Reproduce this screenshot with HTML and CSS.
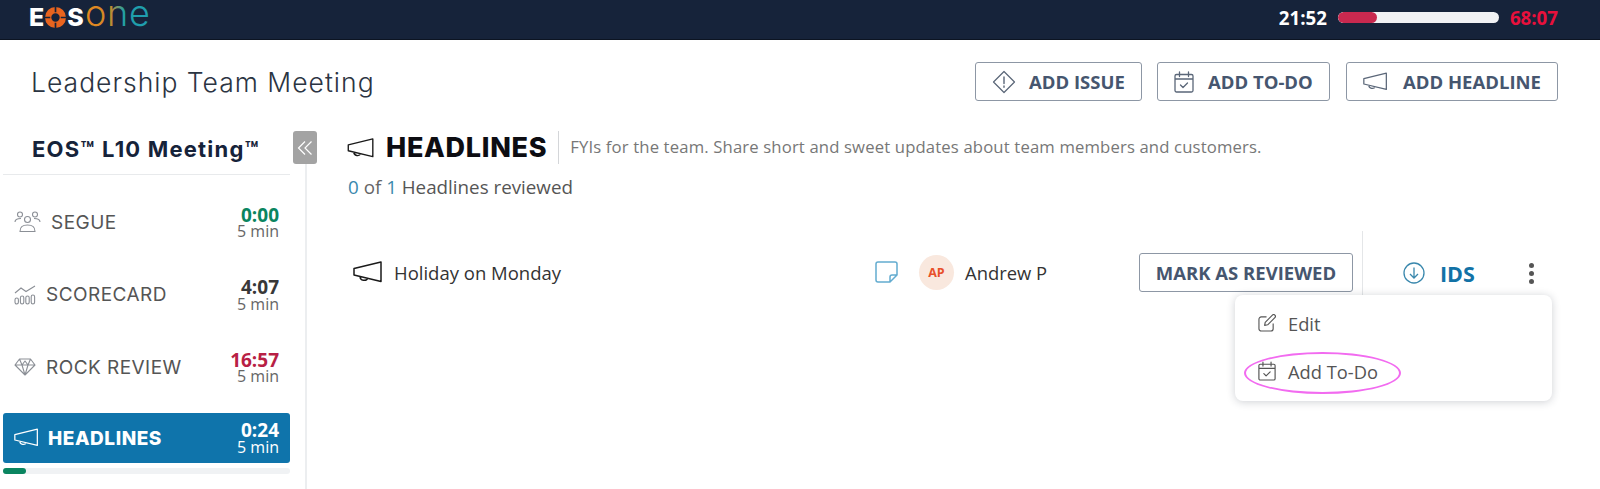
FILE: index.html
```html
<!DOCTYPE html>
<html lang="en">
<head>
<meta charset="utf-8">
<title>Leadership Team Meeting</title>
<link rel="stylesheet" href="styles.css">
</head>
<body>
<svg class="defs" width="0" height="0" aria-hidden="true">
  <defs>
    <linearGradient id="onegrad" x1="0" y1="0" x2="1" y2="0">
      <stop offset="0" stop-color="#e8861f"/>
      <stop offset="0.38" stop-color="#d08a28"/>
      <stop offset="0.6" stop-color="#1fa0a8"/>
      <stop offset="1" stop-color="#1f9db0"/>
    </linearGradient>
  </defs>
  <symbol id="horn" viewBox="0 0 30 22">
    <path d="M1 7.5 L28 1 V20.5 L1 14 Z M1 7.5 V14 M7 15.5 C7 20 13.5 20.5 14.5 17.2" fill="none" stroke="currentColor" stroke-width="1.5" stroke-linejoin="round"/>
  </symbol>
  <symbol id="cal" viewBox="0 0 20 22">
    <path d="M2.5 3.5 H17.5 A1.5 1.5 0 0 1 19 5 V19.5 A1.5 1.5 0 0 1 17.5 21 H2.5 A1.5 1.5 0 0 1 1 19.5 V5 A1.5 1.5 0 0 1 2.5 3.5 Z M1 8 H19 M5.5 1 V5.5 M14.5 1 V5.5 M6.5 14 L9 16.5 L13.5 12" fill="none" stroke="currentColor" stroke-width="1.3" stroke-linecap="round" stroke-linejoin="round"/>
  </symbol>
</svg>

<header class="topbar">
  <div class="logo">
    <span class="logo-eos">E</span>
    <svg class="logo-o" viewBox="0 0 20 20"><circle cx="10" cy="10" r="7" fill="none" stroke="#e8641f" stroke-width="6"/><path d="M10 0 V5 M10 15 V20 M0 10 H5 M15 10 H20" stroke="#16233a" stroke-width="1.6"/></svg>
    <span class="logo-eos">S</span>
    <svg class="logo-one" width="64" height="24" viewBox="0 0 64 24"><text class="logo-one-text" x="0" y="21" fill="url(#onegrad)">one</text></svg>
  </div>
  <div class="timer">
    <span class="timer-now">21:52</span>
    <div class="timer-bar"><div class="timer-fill"></div></div>
    <span class="timer-total">68:07</span>
  </div>
</header>

<section class="pagehead">
  <h1 class="page-title">Leadership Team Meeting</h1>
  <div class="actions">
    <button class="btn btn-issue">
      <svg class="btn-icon" width="24" height="24" viewBox="0 0 24 24"><path d="M12 1.5 L22.5 12 L12 22.5 L1.5 12 Z" fill="none" stroke="currentColor" stroke-width="1.2" stroke-linejoin="round"/><path d="M12 7 V13.5 M12 16 V17.2" stroke="currentColor" stroke-width="1.4" stroke-linecap="round"/></svg>
      ADD ISSUE
    </button>
    <button class="btn btn-todo">
      <svg class="btn-icon" width="20" height="22"><use href="#cal"/></svg>
      ADD TO-DO
    </button>
    <button class="btn btn-headline">
      <svg class="btn-icon" width="25" height="19"><use href="#horn"/></svg>
      ADD HEADLINE
    </button>
  </div>
</section>

<div class="layout">
  <aside class="sidebar">
    <h2 class="side-title">EOS™ L10 Meeting™</h2>
    <nav class="side-list">
      <div class="side-item">
        <svg class="side-icon segue" width="27" height="22" viewBox="0 0 27 22"><g fill="none" stroke="currentColor" stroke-width="1.1"><circle cx="6" cy="3.5" r="2.5"/><circle cx="21" cy="3.5" r="2.5"/><circle cx="13.5" cy="8.5" r="3"/><path d="M1 11 C1 8 3.5 7.5 7 7.5 M26 11 C26 8 23.5 7.5 20 7.5 M6 20.5 C6 15 9 14 13.5 14 C18 14 21 15 21 20.5 Z"/></g></svg>
        <span class="side-label">SEGUE</span>
        <div class="side-time"><b class="t-green">0:00</b><span>5 min</span></div>
      </div>
      <div class="side-item">
        <svg class="side-icon" width="22" height="20" viewBox="0 0 22 20"><g fill="none" stroke="currentColor" stroke-width="1.1"><path d="M1 8 L7 3 L12 6.5 L21 1"/><rect x="1" y="13" width="3.4" height="6" rx="1.7"/><rect x="6.4" y="11" width="3.4" height="8" rx="1.7"/><rect x="11.8" y="11" width="3.4" height="8" rx="1.7"/><rect x="17.2" y="10" width="3.4" height="9" rx="1.7"/></g></svg>
        <span class="side-label">SCORECARD</span>
        <div class="side-time"><b>4:07</b><span>5 min</span></div>
      </div>
      <div class="side-item">
        <svg class="side-icon" width="22" height="18" viewBox="0 0 22 18"><path d="M5.5 1 H16.5 L21 7 L11 17 L1 7 Z M1 7 H21 M5.5 1 L8 7 L11 3 L14 7 L16.5 1 M8 7 L11 17 L14 7" fill="none" stroke="currentColor" stroke-width="1.1" stroke-linejoin="round"/></svg>
        <span class="side-label">ROCK REVIEW</span>
        <div class="side-time"><b class="t-red">16:57</b><span>5 min</span></div>
      </div>
      <div class="side-item active">
        <svg class="side-icon" width="25" height="19"><use href="#horn"/></svg>
        <span class="side-label">HEADLINES</span>
        <div class="side-time"><b>0:24</b><span>5 min</span></div>
      </div>
      <div class="progress"><div class="progress-fill"></div></div>
    </nav>
  </aside>

  <main class="main">
    <button class="collapse" aria-label="Collapse">
      <svg width="16" height="16" viewBox="0 0 16 16"><path d="M8 1.5 L1.5 8 L8 14.5 M14.5 1.5 L8 8 L14.5 14.5" fill="none" stroke="#fff" stroke-width="1.2"/></svg>
    </button>
    <div class="section-head">
      <svg class="horn-lg" width="28" height="20"><use href="#horn"/></svg>
      <h2 class="section-title">HEADLINES</h2>
      <p class="section-desc">FYIs for the team. Share short and sweet updates about team members and customers.</p>
    </div>
    <p class="reviewed"><span class="num">0</span> of <span class="num">1</span> <span class="reviewed-word">Headlines reviewed</span></p>

    <div class="row">
      <svg class="horn-row" width="30" height="22"><use href="#horn"/></svg>
      <span class="row-title">Holiday on Monday</span>
      <svg class="note" width="23" height="22" viewBox="0 0 23 22"><path d="M3 1 H20 A2 2 0 0 1 22 3 V14 L15 21 H3 A2 2 0 0 1 1 19 V3 A2 2 0 0 1 3 1 Z M22 14 H17 A2 2 0 0 0 15 16 V21" fill="none" stroke="#63acd0" stroke-width="1.5" stroke-linejoin="round"/></svg>
      <span class="avatar">AP</span>
      <span class="owner">Andrew P</span>
      <button class="btn btn-review">MARK AS REVIEWED</button>
      <div class="ids-cell">
        <svg width="22" height="22" viewBox="0 0 22 22"><circle cx="11" cy="11" r="10" fill="none" stroke="#3a88ad" stroke-width="1.3"/><path d="M11 5.5 V16 M7 12 L11 16 L15 12" fill="none" stroke="#3a88ad" stroke-width="1.3"/></svg>
        <span class="ids">IDS</span>
        <span class="dots"><i></i><i></i><i></i></span>
      </div>
      <div class="menu">
        <div class="menu-item">
          <svg width="18" height="18" viewBox="0 0 19 19"><path d="M9 3 H3.5 A2.5 2.5 0 0 0 1 5.5 V15.5 A2.5 2.5 0 0 0 3.5 18 H13.5 A2.5 2.5 0 0 0 16 15.5 V10 M7 12 L7.6 8.8 L15.2 1.2 A1.4 1.4 0 0 1 17.8 3.8 L10.2 11.4 Z" fill="none" stroke="#555" stroke-width="1.2" stroke-linejoin="round"/></svg>
          <span>Edit</span>
        </div>
        <div class="menu-item">
          <svg class="menu-cal" width="18" height="20"><use href="#cal"/></svg>
          <span>Add To-Do</span>
        </div>
        <div class="ring"></div>
      </div>
    </div>
  </main>
</div>
</body>
</html>
```
FILE: styles.css
```css
* { box-sizing: border-box; }
html, body { margin: 0; padding: 0; }
body {
  width: 1600px;
  height: 489px;
  overflow: hidden;
  background: #fff;
  font-family: "Open Sans", sans-serif;
  color: #333;
}
.defs { position: absolute; }
h1, h2, p { margin: 0; font-weight: inherit; }

.topbar {
  height: 40px;
  background: #16233a;
  border-bottom: 1px solid #0c1422;
  display: flex;
  align-items: center;
  justify-content: space-between;
  padding: 0 42px 5px 29px;
}
.logo { display: flex; align-items: center; height: 24px; }
.logo-eos { font: 800 25px/24px Inter, sans-serif; color: #fff; }
.logo-o { width: 21px; height: 21px; margin: 0 1px; }
.logo-one { margin-left: 1px; flex: none; }
.logo-one-text {
  font: 300 36px Inter, sans-serif;
  letter-spacing: 0.7px;
}
.timer { display: flex; align-items: center; }
.timer-now { font-size: 18.7px; font-weight: 700; color: #fff; }
.timer-bar {
  width: 161px;
  height: 11px;
  margin: 0 11px;
  background: #f1f2f4;
  border-radius: 6px;
  overflow: hidden;
}
.timer-fill { width: 39px; height: 100%; background: #c8294f; border-radius: 6px; }
.timer-total { font-size: 18.7px; font-weight: 700; color: #e8103c; }

.pagehead {
  height: 91px;
  padding: 22px 42px 0 31px;
  display: flex;
  justify-content: space-between;
  align-items: flex-start;
}
.page-title {
  font: 300 26.5px/40px Inter, sans-serif;
  letter-spacing: 1px;
  color: #2b3442;
}
.actions { display: flex; gap: 15px; }
.btn {
  height: 39px;
  display: flex;
  align-items: center;
  background: #fff;
  border: 1px solid #8d97a5;
  border-radius: 3px;
  font: 700 18.5px "Open Sans", sans-serif;
  color: #46566f;
  padding: 0;
  white-space: nowrap;
}
.btn-issue { width: 167px; padding-left: 16px; }
.btn-todo { width: 173px; padding-left: 16px; margin-right: 1px; }
.btn-headline { width: 212px; padding-left: 16px; }
.btn-issue .btn-icon { margin-right: 13px; }
.btn-todo .btn-icon { margin-right: 14px; }
.btn-headline .btn-icon { margin-right: 15px; }
.btn-icon { color: #5a6678; flex: none; }

.layout { display: flex; height: 358px; }
.sidebar {
  width: 307px;
  flex: none;
  border-right: 2px solid #eceef0;
  padding: 0 15px 0 3px;
}
.side-title {
  font: 700 22px/26px Inter, sans-serif;
  letter-spacing: 1.2px;
  color: #16233a;
  padding: 5px 0 12px 29px;
  border-bottom: 1px solid #e8eaec;
  white-space: nowrap;
}
.side-list { display: flex; flex-direction: column; padding-top: 11px; }
.side-item {
  height: 72.5px;
  display: flex;
  align-items: center;
  padding: 0 11px 0 11px;
  color: #555;
}
.side-icon { color: #8b8f96; margin-right: 10px; flex: none; }
.side-label {
  font: 400 19px Inter, sans-serif;
  letter-spacing: 0.45px;
  color: #555;
  flex: 1;
}
.side-time {
  display: flex;
  flex-direction: column;
  align-items: flex-end;
  padding-top: 2px;
  font-size: 16px;
  line-height: 16.5px;
  color: #666;
}
.side-time b { font-size: 19px; font-weight: 700; color: #383838; }
.side-time b.t-green { color: #0a8560; }
.side-time b.t-red { color: #b81f45; }
.side-item.active {
  height: 50px;
  margin-top: 9px;
  background: #0f74ab;
  border-radius: 3px;
  color: #fff;
}
.side-item.active .side-icon { color: #fff; margin-right: 9px; }
.side-item.active .side-label { font-weight: 800; color: #fff; letter-spacing: 0.55px; padding-top: 2px; }
.side-item.active .side-time b,
.side-item.active .side-time span { color: #fff; }
.progress { height: 6px; margin-top: 5px; background: #f0f2f4; border-radius: 3px; }
.progress-fill { width: 22.5px; height: 100%; background: #0a8560; border-radius: 3px; }

.main { flex: 1; position: relative; padding: 0 0 0 40px; }
.collapse {
  position: absolute;
  left: -14px;
  top: 0;
  width: 24px;
  height: 33px;
  border: 0;
  border-radius: 3px;
  background: #a3a3a3;
  display: flex;
  align-items: center;
  justify-content: center;
  padding: 0;
}
.section-head { display: flex; align-items: center; height: 33px; }
.horn-lg { color: #1a1a1a; margin-right: 11px; flex: none; }
.section-title {
  font: 800 27px/33px Inter, sans-serif;
  letter-spacing: 0.7px;
  color: #0d0d12;
  padding-right: 11px;
  border-right: 1px solid #d4d6d9;
  height: 33px;
}
.section-desc { font-size: 16.7px; line-height: 30px; color: #777; margin: 0 0 2px 11px; letter-spacing: 0.14px; }
.reviewed { margin: 11px 0 0 1px; font-size: 18.8px; line-height: 24px; color: #666; }
.reviewed .num { color: #3a88ad; }
.reviewed-word { color: #555; }

.row {
  position: relative;
  display: flex;
  align-items: center;
  height: 64px;
  margin-top: 41px;
  padding-left: 6px;
}
.horn-row { color: #1a1a1a; flex: none; margin-right: 11px; }
.row-title { width: 481px; font-size: 18.5px; color: #333; flex: none; }
.note { margin-right: 21px; flex: none; }
.avatar {
  width: 35px;
  height: 35px;
  border-radius: 50%;
  background: #f9e8de;
  color: #e8502a;
  font-size: 12.5px;
  font-weight: 700;
  display: flex;
  align-items: center;
  justify-content: center;
  margin-right: 11px;
  flex: none;
}
.owner { width: 174px; font-size: 18.4px; color: #333; flex: none; }
.btn-review {
  width: 214px;
  flex: none;
  justify-content: center;
}
.ids-cell {
  width: 201px;
  height: 64px;
  margin: -9px 0 0 9px;
  align-self: flex-start;
  border-left: 1px solid #e4e6e8;
  display: flex;
  align-items: center;
  padding: 20px 0 0 40px;
  flex: none;
}
.ids { font-size: 21.5px; font-weight: 700; color: #1272a6; margin-left: 15px; }
.dots { display: flex; flex-direction: column; gap: 3px; margin-left: 54px; }
.dots i { width: 5px; height: 5px; border-radius: 50%; background: #555; }

.menu {
  position: absolute;
  left: 888px;
  top: 55px;
  width: 317px;
  height: 106px;
  background: #fff;
  border-radius: 8px;
  box-shadow: 0 1px 8px rgba(30, 40, 60, 0.22);
  padding: 4px 0 0 23px;
}
.menu-item {
  display: flex;
  align-items: center;
  height: 48px;
  gap: 12px;
  font-size: 18.3px;
  color: #555;
}
.menu-cal { color: #555; }
.ring {
  position: absolute;
  left: 9px;
  top: 57px;
  width: 157px;
  height: 42px;
  border: 2.5px solid #f26bf0;
  border-radius: 50%;
}
```
